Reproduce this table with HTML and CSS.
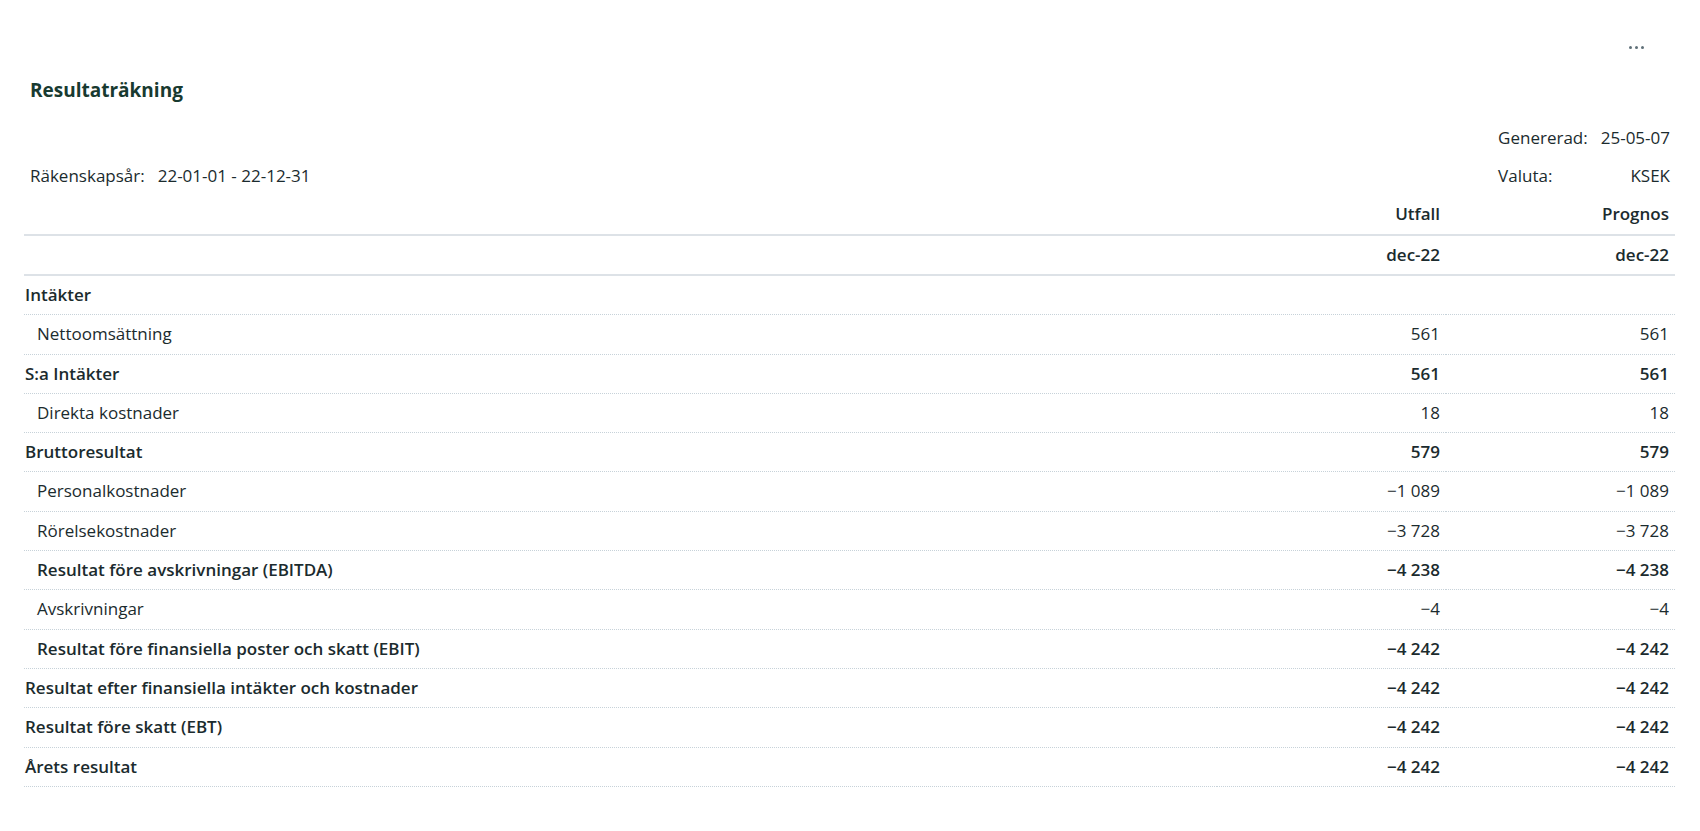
FILE: index.html
```html
<!DOCTYPE html>
<html lang="sv">
<head>
<meta charset="utf-8">
<title>Resultaträkning</title>
<link rel="stylesheet" href="styles.css">
</head>
<body>
<div class="page">
  <div class="toolbar">
    <button class="more" type="button" aria-label="Fler val">
      <svg width="15" height="3" viewBox="0 0 15 3"><circle cx="1.5" cy="1.5" r="1.5"/><circle cx="7.5" cy="1.5" r="1.5"/><circle cx="13.5" cy="1.5" r="1.5"/></svg>
    </button>
  </div>
  <div class="header">
    <h1 class="title">Resultaträkning</h1>
    <div class="meta">
      <div class="meta-left">
        <span class="meta-label">Räkenskapsår:</span>
        <span class="meta-value">22-01-01 - 22-12-31</span>
      </div>
      <div class="meta-right">
        <span class="meta-label">Genererad:</span>
        <span class="meta-value">25-05-07</span>
        <span class="meta-label">Valuta:</span>
        <span class="meta-value">KSEK</span>
      </div>
    </div>
  </div>
  <table class="report">
    <colgroup><col><col class="num-col"><col class="num-col"></colgroup>
    <thead>
      <tr><th></th><th class="num">Utfall</th><th class="num">Prognos</th></tr>
      <tr><th></th><th class="num">dec-22</th><th class="num">dec-22</th></tr>
    </thead>
    <tbody>
      <tr class="bold"><td>Intäkter</td><td class="num"></td><td class="num"></td></tr>
      <tr class="sub"><td>Nettoomsättning</td><td class="num">561</td><td class="num">561</td></tr>
      <tr class="bold"><td>S:a Intäkter</td><td class="num">561</td><td class="num">561</td></tr>
      <tr class="sub"><td>Direkta kostnader</td><td class="num">18</td><td class="num">18</td></tr>
      <tr class="bold"><td>Bruttoresultat</td><td class="num">579</td><td class="num">579</td></tr>
      <tr class="sub"><td>Personalkostnader</td><td class="num">−1&nbsp;089</td><td class="num">−1&nbsp;089</td></tr>
      <tr class="sub"><td>Rörelsekostnader</td><td class="num">−3&nbsp;728</td><td class="num">−3&nbsp;728</td></tr>
      <tr class="sub bold"><td>Resultat före avskrivningar (EBITDA)</td><td class="num">−4&nbsp;238</td><td class="num">−4&nbsp;238</td></tr>
      <tr class="sub"><td>Avskrivningar</td><td class="num">−4</td><td class="num">−4</td></tr>
      <tr class="sub bold"><td>Resultat före finansiella poster och skatt (EBIT)</td><td class="num">−4&nbsp;242</td><td class="num">−4&nbsp;242</td></tr>
      <tr class="bold"><td>Resultat efter finansiella intäkter och kostnader</td><td class="num">−4&nbsp;242</td><td class="num">−4&nbsp;242</td></tr>
      <tr class="bold"><td>Resultat före skatt (EBT)</td><td class="num">−4&nbsp;242</td><td class="num">−4&nbsp;242</td></tr>
      <tr class="bold"><td>Årets resultat</td><td class="num">−4&nbsp;242</td><td class="num">−4&nbsp;242</td></tr>
    </tbody>
  </table>
</div>
</body>
</html>
```
FILE: styles.css
```css
* { box-sizing: border-box; }
html, body { margin: 0; background: #ffffff; }
body {
  font-family: "Open Sans", "Noto Sans", sans-serif;
  font-size: 17px;
  line-height: 22px;
  color: #1b2b2e;
}
.page {
  padding: 35px 25px 0 24px;
}
.toolbar {
  display: flex;
  justify-content: flex-end;
  height: 24px;
  padding-right: 21px;
}
.more {
  border: 0;
  background: transparent;
  padding: 0 10px;
  height: 24px;
  display: flex;
  align-items: center;
  cursor: pointer;
}
.more svg { display: block; fill: #5f7078; }
.header {
  padding: 0 5px 0 6px;
}
.title {
  margin: 17px 0 0;
  font-size: 19px;
  line-height: 28px;
  font-weight: 700;
  color: #183a30;
}
.meta {
  margin-top: 23px;
  display: flex;
  justify-content: space-between;
  align-items: flex-end;
}
.meta-left {
  display: flex;
  gap: 13px;
}
.meta-right {
  display: grid;
  grid-template-columns: auto auto;
  column-gap: 13px;
  row-gap: 16px;
}
.meta-right .meta-value { text-align: right; }
.report {
  margin-top: 8px;
  width: 100%;
  border-collapse: collapse;
  table-layout: fixed;
}
.num-col { width: 229px; }
.report th {
  font-weight: 600;
  text-align: left;
  padding: 8px 6px 9px 1px;
  border-bottom: 2px solid #dde2e7;
}
.report thead tr + tr th {
  padding-bottom: 8px;
}
.report td {
  padding: 8px 6px 8.3px 1px;
  border-bottom: 1px dotted #c7d2d9;
  white-space: nowrap;
}
.report .num { text-align: right; }
.report .bold td { font-weight: 600; }
.report .sub td:first-child { padding-left: 13px; }
```
